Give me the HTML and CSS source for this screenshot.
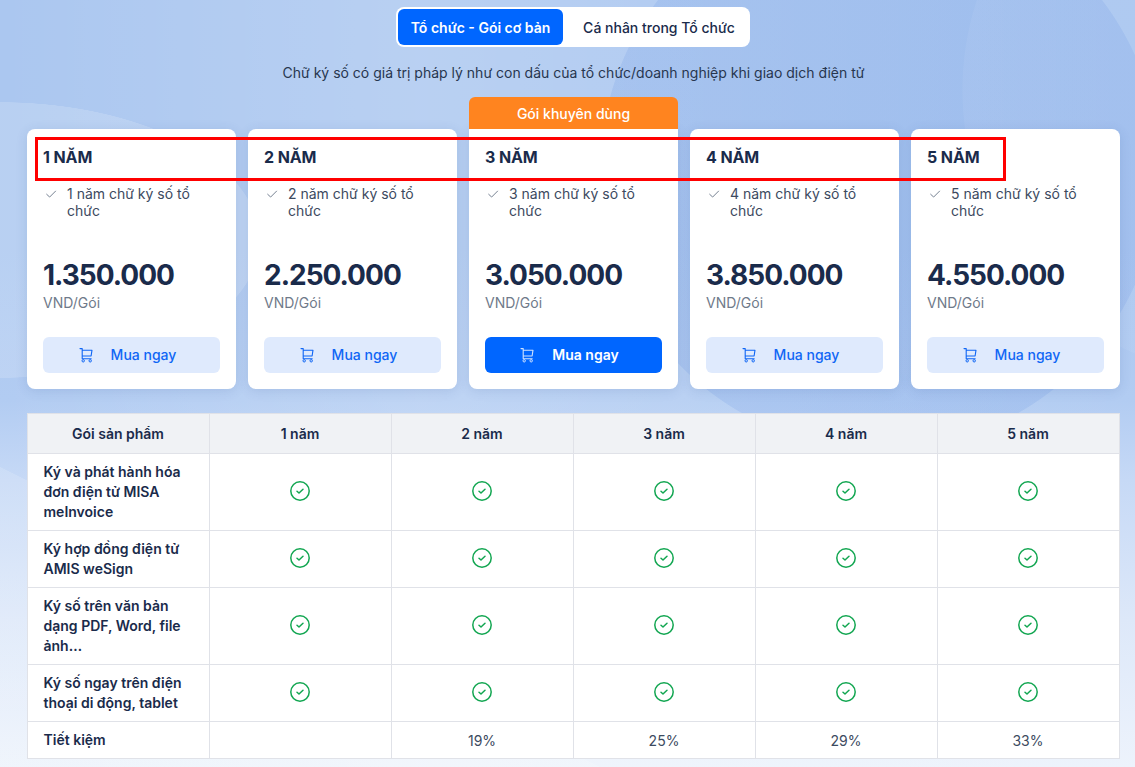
FILE: index.html
```html
<!DOCTYPE html>
<html lang="vi">
<head>
<meta charset="utf-8">
<title>Chữ ký số</title>
<link rel="stylesheet" href="styles.css">
</head>
<body>
<svg class="defs" width="0" height="0" aria-hidden="true">
  <symbol id="cart" viewBox="0 0 16 16">
    <path d="M2 1.6h2.2v10.2h9M4.2 3.2h9.8l-.9 5.8H4.2" fill="none" stroke="currentColor" stroke-width="1.1" stroke-linejoin="round" stroke-linecap="round"/>
    <circle cx="5.2" cy="13.8" r="1.2" fill="none" stroke="currentColor" stroke-width="1"/>
    <circle cx="12.2" cy="13.8" r="1.2" fill="none" stroke="currentColor" stroke-width="1"/>
  </symbol>
  <symbol id="ok" viewBox="0 0 20 20">
    <circle cx="10" cy="10" r="9.2" fill="none" stroke="currentColor" stroke-width="1.5"/>
    <path d="M7 10.2l2 1.8 4-3.8" fill="none" stroke="currentColor" stroke-width="1.5" stroke-linecap="round" stroke-linejoin="round"/>
  </symbol>
  <symbol id="tick" viewBox="0 0 11 8">
    <path d="M.4 4l3.4 3.2L10.4.6" fill="none" stroke="currentColor" stroke-width="1"/>
  </symbol>
</svg>
<main class="page">
  <div class="toggle-row">
    <div class="toggle">
      <span class="tab tab-active">Tổ chức - Gói cơ bản</span>
      <span class="tab tab-other">Cá nhân trong Tổ chức</span>
    </div>
  </div>
  <p class="subtitle">Chữ ký số có giá trị pháp lý như con dấu của tổ chức/doanh nghiệp khi giao dịch điện tử</p>

  <section class="plans">
    <article class="plan">
      <h2 class="plan-title">1 NĂM</h2>
      <div class="feature"><svg class="tick"><use href="#tick"/></svg><span>1 năm chữ ký số tổ chức</span></div>
      <div class="price">1.350.000</div>
      <div class="unit">VND/Gói</div>
      <a class="buy"><svg class="cart"><use href="#cart"/></svg><span>Mua ngay</span></a>
    </article>
    <article class="plan">
      <h2 class="plan-title">2 NĂM</h2>
      <div class="feature"><svg class="tick"><use href="#tick"/></svg><span>2 năm chữ ký số tổ chức</span></div>
      <div class="price">2.250.000</div>
      <div class="unit">VND/Gói</div>
      <a class="buy"><svg class="cart"><use href="#cart"/></svg><span>Mua ngay</span></a>
    </article>
    <article class="plan plan-featured">
      <div class="badge">Gói khuyên dùng</div>
      <h2 class="plan-title">3 NĂM</h2>
      <div class="feature"><svg class="tick"><use href="#tick"/></svg><span>3 năm chữ ký số tổ chức</span></div>
      <div class="price">3.050.000</div>
      <div class="unit">VND/Gói</div>
      <a class="buy buy-primary"><svg class="cart"><use href="#cart"/></svg><span>Mua ngay</span></a>
    </article>
    <article class="plan">
      <h2 class="plan-title">4 NĂM</h2>
      <div class="feature"><svg class="tick"><use href="#tick"/></svg><span>4 năm chữ ký số tổ chức</span></div>
      <div class="price">3.850.000</div>
      <div class="unit">VND/Gói</div>
      <a class="buy"><svg class="cart"><use href="#cart"/></svg><span>Mua ngay</span></a>
    </article>
    <article class="plan">
      <h2 class="plan-title">5 NĂM</h2>
      <div class="feature"><svg class="tick"><use href="#tick"/></svg><span>5 năm chữ ký số tổ chức</span></div>
      <div class="price">4.550.000</div>
      <div class="unit">VND/Gói</div>
      <a class="buy"><svg class="cart"><use href="#cart"/></svg><span>Mua ngay</span></a>
    </article>
  </section>

  <table class="compare">
    <thead>
      <tr class="r-head"><th>Gói sản phẩm</th><th>1 năm</th><th>2 năm</th><th>3 năm</th><th>4 năm</th><th>5 năm</th></tr>
    </thead>
    <tbody>
      <tr class="r-tall"><th>Ký và phát hành hóa đơn điện tử MISA meInvoice</th><td><svg class="ok"><use href="#ok"/></svg></td><td><svg class="ok"><use href="#ok"/></svg></td><td><svg class="ok"><use href="#ok"/></svg></td><td><svg class="ok"><use href="#ok"/></svg></td><td><svg class="ok"><use href="#ok"/></svg></td></tr>
      <tr class="r-mid"><th>Ký hợp đồng điện tử AMIS weSign</th><td><svg class="ok"><use href="#ok"/></svg></td><td><svg class="ok"><use href="#ok"/></svg></td><td><svg class="ok"><use href="#ok"/></svg></td><td><svg class="ok"><use href="#ok"/></svg></td><td><svg class="ok"><use href="#ok"/></svg></td></tr>
      <tr class="r-tall"><th>Ký số trên văn bản dạng PDF, Word, file ảnh…</th><td><svg class="ok"><use href="#ok"/></svg></td><td><svg class="ok"><use href="#ok"/></svg></td><td><svg class="ok"><use href="#ok"/></svg></td><td><svg class="ok"><use href="#ok"/></svg></td><td><svg class="ok"><use href="#ok"/></svg></td></tr>
      <tr class="r-mid"><th>Ký số ngay trên điện thoại di động, tablet</th><td><svg class="ok"><use href="#ok"/></svg></td><td><svg class="ok"><use href="#ok"/></svg></td><td><svg class="ok"><use href="#ok"/></svg></td><td><svg class="ok"><use href="#ok"/></svg></td><td><svg class="ok"><use href="#ok"/></svg></td></tr>
      <tr class="r-last"><th>Tiết kiệm</th><td></td><td>19%</td><td>25%</td><td>29%</td><td>33%</td></tr>
    </tbody>
  </table>
  <div class="annotation" aria-hidden="true"></div>
</main>
</body>
</html>
```

FILE: styles.css
```css
* { box-sizing: border-box; }
html, body { height: 100%; }
body {
  margin: 0;
  height: 767px;
  overflow: hidden;
  font-family: Inter, "Noto Sans", sans-serif;
  color: #1a2b4b;
  background-color: #e9f0fb;
  background-image:
    radial-gradient(ellipse 260px 138px at 0 240px, rgba(255, 255, 255, .16) 0 99.7%, transparent 100%),
    radial-gradient(circle 288px at 1250px 90px, rgba(255, 255, 255, .05) 0 99.7%, transparent 100%),
    radial-gradient(circle 280px at 880px 170px, rgba(70, 125, 220, .13) 0 99.7%, transparent 100%),
    linear-gradient(206.57deg, transparent 0 925px, rgba(255, 255, 255, .14) 925.5px),
    linear-gradient(90deg, rgba(255, 255, 255, 0) 0, rgba(255, 255, 255, .17) 420px, rgba(255, 255, 255, .12) 600px, rgba(255, 255, 255, 0) 1135px),
    linear-gradient(180deg, #abc7f0 0, #abc7f0 250px, #b2ccf2 400px, #c6d9f6 480px, #dde8f9 620px, #edf3fc 767px);
}
.defs { position: absolute; }
.page { position: relative; padding: 7px 15px 0 27px; height: 767px; }

.toggle-row { display: flex; justify-content: center; padding-right: 1px; }
.toggle {
  display: flex; align-items: stretch;
  width: 354px; height: 40px; padding: 2px;
  background: #fff; border-radius: 8px;
}
.tab {
  display: flex; align-items: center; justify-content: center;
  flex: 1 1 auto;
  font-size: 14px; font-weight: 500; color: #1a2b4b;
  border-radius: 6px;
}
.tab-other { padding-left: 7px; }
.tab-active { flex: 0 0 165px; background: #0066ff; color: #fff; font-weight: 600; }

.subtitle {
  margin: 16px 0 0; height: 20px;
  font-size: 14px; line-height: 20px; text-align: center; color: #27364f;
}

.plans {
  display: grid; grid-template-columns: repeat(5, 209px); gap: 12px;
  margin-top: 46px;
}
.plan {
  position: relative;
  height: 260px; padding: 18px 16px 16px;
  background: #fff; border-radius: 8px;
  box-shadow: 0 2px 12px rgba(40, 80, 150, .14);
  display: flex; flex-direction: column;
}
.plan-featured { border-radius: 0 0 8px 8px; }
.badge {
  position: absolute; left: 0; right: 0; top: -32px; height: 32px;
  display: flex; align-items: center; justify-content: center;
  background: #ff841f; color: #fff;
  font-size: 14px; font-weight: 500;
  border-radius: 6px 6px 0 0;
}
.plan-title { margin: 0; font-size: 16px; line-height: 20px; font-weight: 700; letter-spacing: -.1px; color: #1a2b4b; }
.feature {
  display: flex; gap: 10.5px; margin-top: 18px; padding-left: 3px; height: 73px;
  font-size: 14px; line-height: 17px; color: #3c4a60;
}
.feature span { width: 130px; }
.tick { flex: none; width: 10.5px; height: 8px; margin-top: 5px; color: #6d7a8c; }
.price { font-size: 28px; line-height: 34px; font-weight: 700; letter-spacing: -1px; color: #1a2b4b; }
.unit { margin-top: 1px; font-size: 14px; line-height: 20px; color: #6f7a8a; }
.buy {
  display: flex; align-items: center; justify-content: center; gap: 17px;
  height: 36px; margin-top: auto; padding: 0 9px 1px 0;
  background: #dfeafd; color: #0f66f5;
  font-size: 14px; font-weight: 500; border-radius: 6px;
}
.cart { width: 16px; height: 16px; flex: none; }
.buy-primary { background: #0066ff; color: #fff; font-weight: 600; }
.buy-primary .cart { color: #cfe2ff; }

.compare {
  width: 1093px; margin-top: 24px;
  table-layout: fixed;
  border-collapse: collapse;
  background: #fff;
  font-size: 14px; line-height: 20px;
}
.compare th, .compare td { border: 1px solid #e0e2e8; padding: 0; text-align: center; vertical-align: middle; }
.compare th:first-child { width: 182px; }
.compare tbody th { text-align: left; padding: 8px 16px 8px 15.5px; font-weight: 600; color: #1a2b4b; }
.compare thead th { background: #f0f2f5; font-weight: 600; color: #1a2b4b; padding-right: 1px; }
.compare td { color: #3c4a60; padding-right: 1px; }
.r-head { height: 40px; }
.r-tall { height: 77px; }
.r-mid { height: 57px; }
.r-last { height: 37px; }
.r-last td { padding-top: 2px; }
.ok { display: block; width: 20px; height: 20px; margin: -2px auto 0; color: #12a651; }

.annotation {
  position: absolute; left: 35px; top: 137px; width: 971px; height: 44px;
  border: 3.5px solid #f00;
}
```
